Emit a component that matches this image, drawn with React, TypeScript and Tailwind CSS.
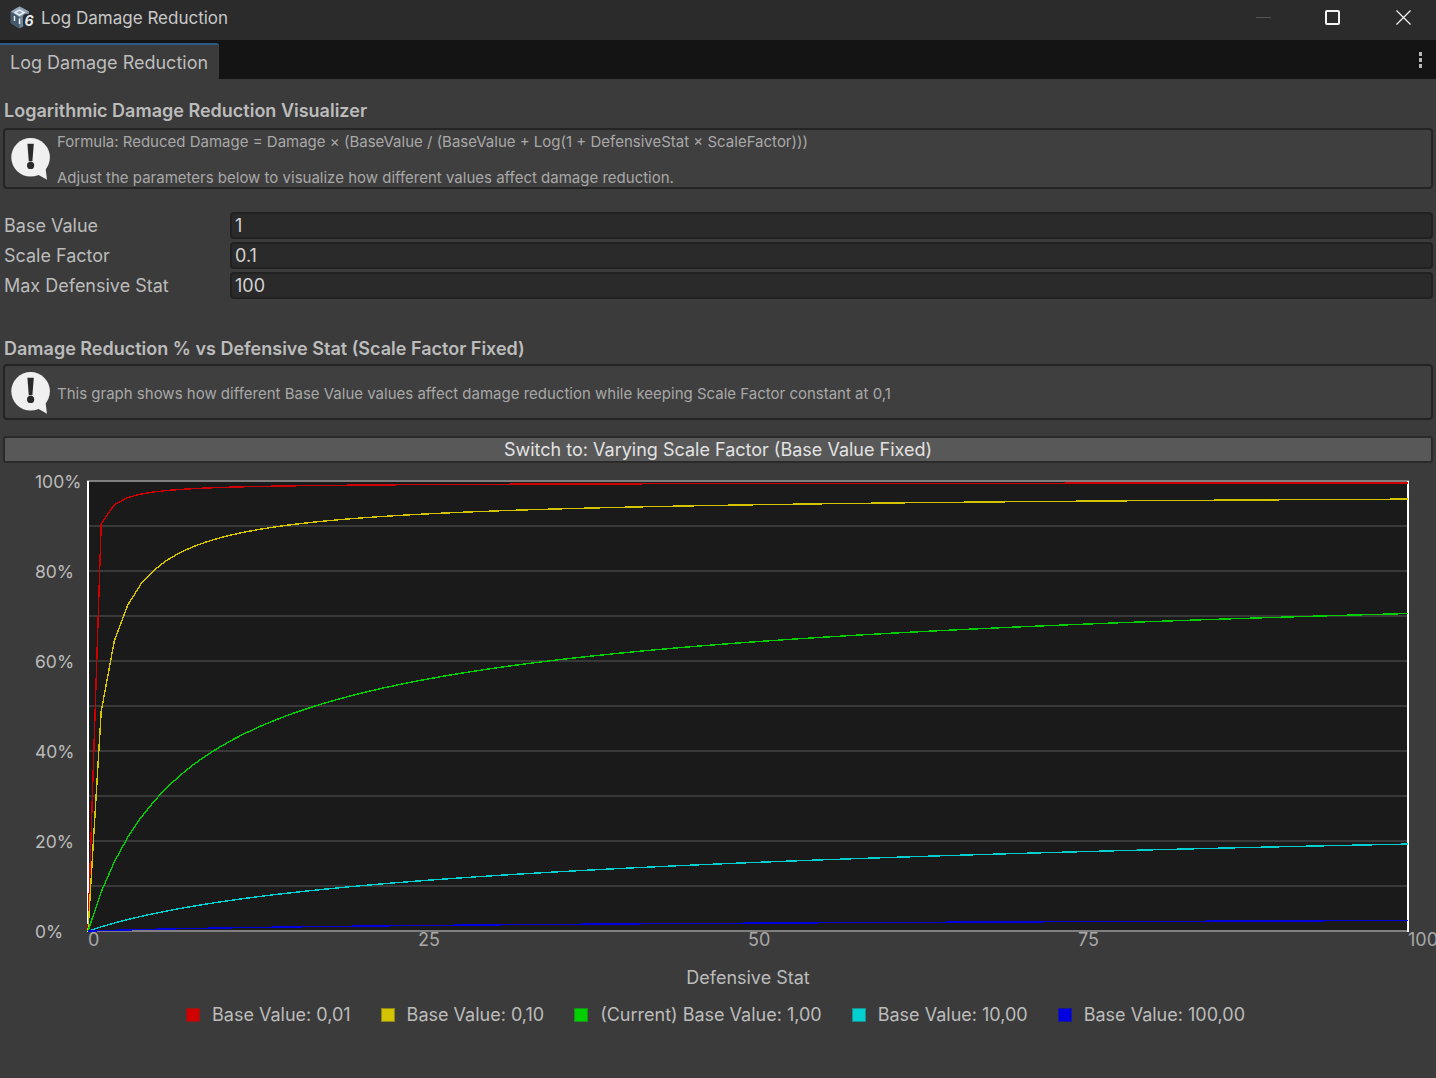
const series = [
  { base: 0.01, color: "#d00000", label: "Base Value: 0,01", border: "border-[#8f1a1a]" },
  { base: 0.1, color: "#d4c400", label: "Base Value: 0,10", border: "border-[#8f861a]" },
  { base: 1, color: "#00d000", label: "(Current) Base Value: 1,00", border: "border-[#1a8f1a]" },
  { base: 10, color: "#00d0d0", label: "Base Value: 10,00", border: "border-[#1a8f8f]" },
  { base: 100, color: "#0000e0", label: "Base Value: 100,00", border: "border-[#1a1a8f]" },
];

function curve(base: number) {
  const pts: string[] = [];
  for (let i = 0; i <= 100; i++) {
    const log = Math.log(1 + i * 0.1);
    const reduction = log / (base + log);
    pts.push(`${(1 + i * 13.2).toFixed(2)},${(451.1 - reduction * 450).toFixed(2)}`);
  }
  return pts.join(" ");
}

function InfoIcon() {
  return (
    <svg width="40" height="42" viewBox="0 0 40 42" className="shrink-0">
      <circle cx="19.6" cy="19.3" r="19.3" fill="#f0f0f0" />
      <path d="M25 35.5 L36 41.8 L34.5 30 Z" fill="#f0f0f0" />
      <path d="M16.4 5.8 h6.4 l-1.4 17.5 h-3.6 z" fill="#2a2a2a" />
      <circle cx="19.6" cy="27.4" r="3.6" fill="#2a2a2a" />
    </svg>
  );
}

function Field({ label, value }: { label: string; value: string }) {
  return (
    <div className="flex h-[30px] items-center">
      <div className="w-[230px] pl-1 text-[18px] text-[#bcbcbc]">{label}</div>
      <div className="flex h-[27px] flex-1 items-center rounded-[4px] border-2 border-[#212121] bg-[#2a2a2a] pl-[3px] text-[18px] text-[#d2d2d2]">
        {value}
      </div>
    </div>
  );
}

export default function App() {
  return (
    <div className="flex h-[1078px] w-[1436px] flex-col overflow-hidden bg-[#3b3b3b] font-['Inter',sans-serif]">
      <div className="flex h-[40px] items-center bg-[#2b2b2b] pb-[5px]">
        <svg width="24" height="26" viewBox="0 0 24 26" className="ml-[10px]">
          <path d="M9.5 1.5 L19 6.5 V18 L9.5 23.5 L0.8 18 V6.5 Z" fill="#6f8397" />
          <path d="M9.5 1.5 L19 6.5 L9.5 12 L0.8 6.5 Z" fill="#93a6b8" />
          <path d="M0.8 6.5 L9.5 12 V23.5 L0.8 18 Z" fill="#465a6e" />
          <path d="M9.5 5 L14 7.6 L9.5 10.2 L5 7.6 Z" fill="none" stroke="#eef2f6" strokeWidth="1.4" />
          <path d="M4.5 11 V16 M14.5 11 V16 M9.5 13.5 V19" stroke="#eef2f6" strokeWidth="1.4" />
          <rect x="13" y="9" width="11" height="13" rx="3" fill="#2b2b2b" />
          <text x="14.4" y="20.6" fontSize="14" fontWeight="700" fontStyle="italic" fill="#e6ebf0">6</text>
        </svg>
        <span className="ml-[7px] pt-[2px] text-[17px] text-[#c8c8c8]">Log Damage Reduction</span>
        <div className="ml-auto flex items-center">
          <div className="mr-[54px] h-px w-[15px] bg-[#555555]" />
          <div className="mr-[56px] h-[15px] w-[15px] rounded-[2px] border-2 border-[#f4f4f4]" />
          <svg width="15" height="15" viewBox="0 0 16 16" className="mr-[25px]">
            <path d="M0.5 0.5 L15.5 15.5 M15.5 0.5 L0.5 15.5" stroke="#f4f4f4" strokeWidth="1.3" />
          </svg>
        </div>
      </div>

      <div className="flex h-[39px] items-stretch bg-[#141414] pt-[3px]">
        <div className="flex w-[219px] items-center whitespace-nowrap rounded-tr-[3px] border-t-2 border-[#2c5d87] bg-[#3b3b3b] pl-[10px] text-[18px] text-[#bdbdbd]">
          Log Damage Reduction
        </div>
        <div className="ml-auto mr-[14px] flex flex-col justify-center gap-[2px] pb-[2px]">
          <div className="h-[4px] w-[3px] bg-[#b8b8b8]" />
          <div className="h-[4px] w-[3px] bg-[#b8b8b8]" />
          <div className="h-[4px] w-[3px] bg-[#b8b8b8]" />
        </div>
      </div>

      <div className="flex flex-col pr-[3px]">
        <h1 className="ml-1 mt-[19px] text-[18px] leading-[26px] font-semibold text-[#bcbcbc]">
          Logarithmic Damage Reduction Visualizer
        </h1>
        <div className="ml-[3px] mt-[4px] flex h-[61px] items-center rounded-[4px] border-2 border-[#242424] bg-[#3f3f3f] pl-[6px]">
          <InfoIcon />
          <div className="ml-[6px] flex h-full flex-col gap-[16px] pt-[2px] text-[15px] leading-[20px] text-[#a8a8a8]">
            <div>Formula: Reduced Damage = Damage × (BaseValue / (BaseValue + Log(1 + DefensiveStat × ScaleFactor)))</div>
            <div>Adjust the parameters below to visualize how different values affect damage reduction.</div>
          </div>
        </div>

        <div className="mt-[21px] flex flex-col">
          <Field label="Base Value" value="1" />
          <Field label="Scale Factor" value="0.1" />
          <Field label="Max Defensive Stat" value="100" />
        </div>

        <h2 className="ml-1 mt-[36px] text-[18px] leading-[26px] font-semibold text-[#bcbcbc]">
          Damage Reduction % vs Defensive Stat (Scale Factor Fixed)
        </h2>
        <div className="ml-[3px] mt-[2px] flex h-[56px] items-center rounded-[4px] border-2 border-[#242424] bg-[#3f3f3f] pl-[6px] pt-px">
          <InfoIcon />
          <div className="ml-[6px] pt-[3px] text-[15px] text-[#a8a8a8]">
            This graph shows how different Base Value values affect damage reduction while keeping Scale Factor constant at 0,1
          </div>
        </div>

        <div className="ml-[3px] mt-[16px] flex h-[27px] items-center justify-center rounded-[3px] border-2 border-[#2a2a2a] bg-[#585858] text-[18px] text-[#e2e2e2]">
          Switch to: Varying Scale Factor (Base Value Fixed)
        </div>
      </div>

      <div className="mt-[3px] flex">
        <div className="mt-px flex h-[480px] w-[87px] shrink-0 flex-col justify-between pl-[35px] text-[17.5px] leading-[30px] text-[#bcbcbc]">
          <div>100%</div>
          <div>80%</div>
          <div>60%</div>
          <div>40%</div>
          <div>20%</div>
          <div>0%</div>
        </div>
        <div className="flex flex-col pt-[14px]">
          <svg width="1322" height="452" viewBox="0 0 1322 452" className="block">
            <rect x="0" y="0" width="1322" height="452" fill="#1a1a1a" />
            {[46, 91, 136, 181, 226, 271, 316, 361, 406].map((y) => (
              <line key={y} x1="0" x2="1322" y1={y} y2={y} stroke="#444444" strokeWidth="1.5" />
            ))}
            <line x1="0" x2="1322" y1="1" y2="1" stroke="#808080" strokeWidth="2" />
            <line x1="0" x2="1322" y1="451" y2="451" stroke="#808080" strokeWidth="2" />
            <line x1="1" x2="1" y1="1" y2="452" stroke="#ffffff" strokeWidth="2" />
            <line x1="1321" x2="1321" y1="1" y2="452" stroke="#ffffff" strokeWidth="2" />
            {series.map((s) => (
              <polyline key={s.base} points={curve(s.base)} fill="none" stroke={s.color} strokeWidth="1.4" shapeRendering="crispEdges" />
            ))}
          </svg>
          <div className="ml-px flex text-[18px] leading-[16px] text-[#a8a8a8]">
            <div className="w-[330px] shrink-0">0</div>
            <div className="w-[330px] shrink-0">25</div>
            <div className="w-[330px] shrink-0">50</div>
            <div className="w-[330px] shrink-0">75</div>
            <div className="w-[330px] shrink-0">100</div>
          </div>
          <div className="ml-px mt-[18px] w-[1320px] text-center text-[18px] leading-[24px] text-[#bcbcbc]">
            Defensive Stat
          </div>
        </div>
      </div>

      <div className="flex gap-[30px] pl-[186px] pt-[13px] text-[18px] leading-[24px] text-[#bcbcbc]">
        {series.map((s) => (
          <div key={s.base} className="flex items-center gap-[12px]">
            <div className={`h-[14px] w-[14px] border ${s.border}`} style={{ backgroundColor: s.color }} />
            <span>{s.label}</span>
          </div>
        ))}
      </div>
    </div>
  );
}
